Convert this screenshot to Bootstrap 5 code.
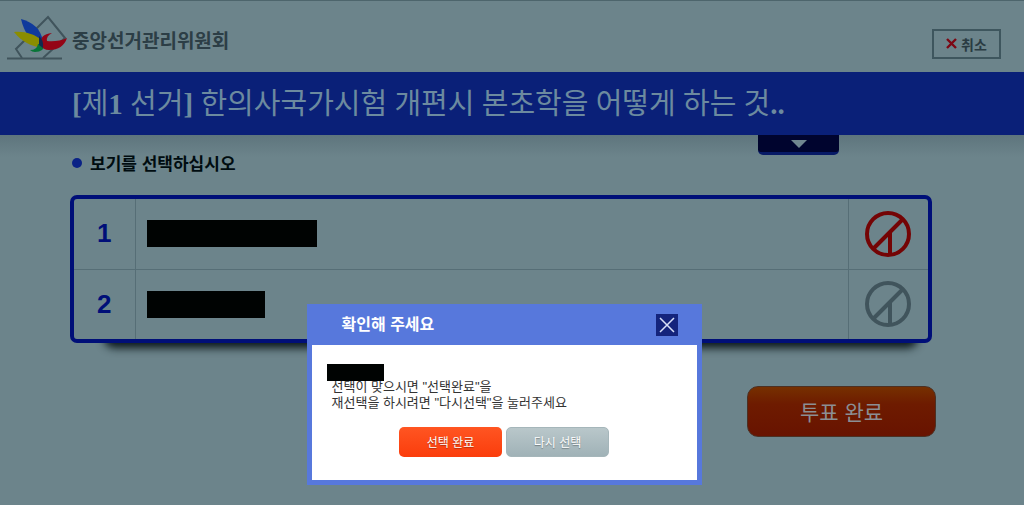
<!DOCTYPE html>
<html lang="ko">
<head>
<meta charset="utf-8">
<meta name="viewport" content="width=device-width, initial-scale=1">
<title>중앙선거관리위원회</title>
<link rel="stylesheet" href="https://cdn.jsdelivr.net/npm/bootstrap@5.3.0/dist/css/bootstrap.min.css">
<style>
  body { background: #6c848b; font-family: "Liberation Sans", "Noto Sans CJK KR", sans-serif; color: #000c10; }
  .kr { font-family: "Noto Sans CJK KR", sans-serif; }
  .site-head { height: 72px; padding: 2px 23px 0 7px; border-top: 1px solid #4d656c; }
  .brand-name { font-size: 19px; line-height: 24px; color: #2c3e46; margin: 4px 0 0 4px; }
  .cancel-btn { border: 2px solid #3e565e; background: transparent; color: #2a3b42; width: 69px; height: 30px; margin-top: 12px; font-size: 14px; line-height: 20px; }
  .title-bar { height: 63px; background: #0a2078; padding: 0 72px; }
  .title-bar h1 { font-family: "Liberation Serif", "Noto Sans CJK KR", serif; font-size: 29px; line-height: 40px; color: #6c8a9f; }
  .main-area { padding: 0 92px 0 70px; background: linear-gradient(#5e757d, #6c848b 22px); }
  .hint-row { height: 60px; padding: 0 93px 0 2px; }
  .hint-text { font-size: 17px; line-height: 24px; padding-top: 16px; }
  .hint-dot { width: 10px; height: 10px; background: #0a2286; }
  .drop-tab { width: 81px; height: 20px; border: 0; border-bottom: 3px solid #071a66; border-radius: 0 0 5px 5px; background: #00042e; }
  .ballot { position: relative; border: 4px solid #000f78; border-radius: 7px; background: #6c848b; }
  .ballot-shell { position: relative; z-index: 0; }
  .ballot-shell::after { content: ""; position: absolute; z-index: -1; left: 34px; right: 14px; bottom: 2px; height: 20px; border-radius: 10px; box-shadow: 0 7px 9px #0b181c; }
  .ballot-table { table-layout: fixed; color: #000f78; }
  .ballot-table td, .ballot-table th { height: 70px; border: 0 solid #566e76; vertical-align: middle; }
  .ballot-table tr + tr > * { border-top-width: 1px; }
  .ballot-table * + td { border-left-width: 1px; }
  .num-col { width: 61px; font-size: 26px; }
  .mark-col { width: 80px; }
  .redact { display: block; height: 27px; margin-left: 10px; background: #000302; }
  .redact-long { width: 170px; }
  .redact-mid { width: 118px; }
  .redact-name { width: 57px; height: 17px; margin: 0 0 0 -5px; position: relative; }
  .mark-btn { border: 0; background: none; color: #40545c; }
  .mark-btn.picked { color: #740405; }
  .vote-btn { width: 189px; height: 51px; margin-top: 43px; border: 1px solid #4c3023; border-radius: 11px; color: #8b8f94; font-size: 21px; background: linear-gradient(#763000, #6e1b00 35%, #681300); }
  .main-area .vote-row { margin-right: -4px; }
  .confirm-layer { padding: 304px 16px 0 0; pointer-events: none; }
  .confirm-box { width: 395px; max-width: 395px; margin: 0 auto; }
  .confirm-box .modal-content { background: #5778dc; border: 0; border-radius: 0; padding: 0 5px 5px; }
  .confirm-head { height: 41px; padding: 0 19px 0 30px; }
  .confirm-head h2 { font-size: 16px; line-height: 24px; color: #fff; }
  .close-btn { width: 22px; height: 22px; background: #14247c; border: 0; }
  .confirm-body { background: #fff; padding: 19px 20px 23px; color: #333; font-size: 13px; line-height: 16px; }
  .confirm-body p { margin: -2px 0 16px; }
  .act-btn { width: 103px; height: 30px; border: 0; border-radius: 5px; color: #fff; font-size: 12px; text-shadow: 0 1px 1px #0005; }
  .act-done { background: linear-gradient(#ff5522, #fb3d0c); }
  .act-redo { background: linear-gradient(#b9c7ca, #a0b2b7); border: 1px solid #a5b6ba; }
</style>
</head>
<body>
<header class="site-head d-flex align-items-center justify-content-between">
  <div class="d-flex align-items-center">
    <svg width="61" height="48" viewBox="0 0 61 48" aria-hidden="true">
      <path d="M15 44L9 35L41 3L58 24L36 44" fill="none" stroke="#40545c" stroke-width="2"/>
      <path d="M0 44.500H55" stroke="#40545c" stroke-width="2"/>
      <path d="M14 5C25 8 34 14 36 28L33 33C24 28 17 18 14 5Z" fill="#103a9c"/>
      <path d="M7 18C17 17 28 20 34 26L35 34C24 32 15 28 7 18Z" fill="#8b8d00"/>
      <path d="M23 36Q30 36 31 30L38 30Q37 38 28 38Q25 38 23 36Z" fill="#087538"/>
      <path d="M45 19Q32 20 34 31Q36 36 42 36Q56 36 60 24Q51 28 40 27Q39 22 45 19Z" fill="#940516"/>
      <path d="M32 22Q37 26 36 34L32 31Z" fill="#102a50"/>
    </svg>
    <strong class="brand-name kr">중앙선거관리위원회</strong>
  </div>
  <button type="button" class="cancel-btn kr fw-bold p-0 d-flex align-items-center justify-content-center gap-1">
    <svg width="11" height="11" viewBox="0 0 11 11" aria-hidden="true"><path d="M1 1L10 10M10 1L1 10" stroke="#7c0714" stroke-width="2.400"/></svg>
    취소
  </button>
</header>

<div class="title-bar d-flex align-items-center">
  <h1 class="fw-normal m-0 text-nowrap"><b>[</b>제<b>1</b> 선거<b>]</b> 한의사국가시험 개편시 본초학을 어떻게 하는 것<b>..</b></h1>
</div>

<main class="main-area">
  <div class="hint-row d-flex justify-content-between align-items-start">
    <div class="hint-text kr fw-bold d-flex align-items-center"><span class="hint-dot rounded-circle me-2"></span>보기를 선택하십시오</div>
    <button type="button" class="drop-tab p-0 d-flex align-items-center justify-content-center" aria-label="전체 제목 보기">
      <svg width="16" height="8" viewBox="0 0 16 8" aria-hidden="true"><path d="M0 0H16L8 8Z" fill="#70868f"/></svg>
    </button>
  </div>

  <div class="ballot-shell">
    <div class="ballot">
      <table class="ballot-table w-100">
        <colgroup><col class="num-col"><col><col class="mark-col"></colgroup>
        <tbody>
          <tr>
            <th class="num-col text-center" scope="row">1</th>
            <td><span class="redact redact-long"></span></td>
            <td class="text-center"><button type="button" class="mark-btn picked p-0 align-middle" aria-label="1번 선택" aria-pressed="true">
              <svg class="d-block" width="46" height="46" viewBox="0 0 46 46" fill="none" stroke="currentColor" stroke-width="4" aria-hidden="true"><circle cx="23" cy="23" r="21"/><path d="M8 38L38 8M25 21V44"/></svg></button></td>
          </tr>
          <tr>
            <th class="num-col text-center" scope="row">2</th>
            <td><span class="redact redact-mid"></span></td>
            <td class="text-center"><button type="button" class="mark-btn p-0 align-middle" aria-label="2번 선택" aria-pressed="false">
              <svg class="d-block" width="46" height="46" viewBox="0 0 46 46" fill="none" stroke="currentColor" stroke-width="4" aria-hidden="true"><circle cx="23" cy="23" r="21"/><path d="M8 38L38 8M25 21V44"/></svg></button></td>
          </tr>
        </tbody>
      </table>
    </div>
  </div>

  <div class="vote-row d-flex justify-content-end">
    <button type="button" class="vote-btn kr p-0">투표 완료</button>
  </div>
</main>

<div class="modal show d-block confirm-layer" role="dialog" aria-labelledby="confirmTitle">
  <div class="modal-dialog confirm-box">
    <div class="modal-content">
      <div class="confirm-head d-flex align-items-center justify-content-between">
        <h2 id="confirmTitle" class="kr fw-bold m-0 mb-1">확인해 주세요</h2>
        <button type="button" class="close-btn p-0 d-flex align-items-center justify-content-center" aria-label="닫기">
          <svg width="16" height="16" viewBox="0 0 16 16" aria-hidden="true"><path d="M1 1L15 15M15 1L1 15" stroke="#d8e0f8" stroke-width="1.500"/></svg>
        </button>
      </div>
      <div class="confirm-body">
        <span class="redact redact-name"></span>
        <p>선택이 맞으시면 "선택완료"을<br>재선택을 하시려면 "다시선택"을 눌러주세요</p>
        <div class="d-flex justify-content-center gap-1">
          <button type="button" class="act-btn act-done kr p-0">선택 완료</button>
          <button type="button" class="act-btn act-redo kr p-0">다시 선택</button>
        </div>
      </div>
    </div>
  </div>
</div>
<script src="https://cdn.jsdelivr.net/npm/bootstrap@5.3.0/dist/js/bootstrap.bundle.min.js"></script>
</body>
</html>
